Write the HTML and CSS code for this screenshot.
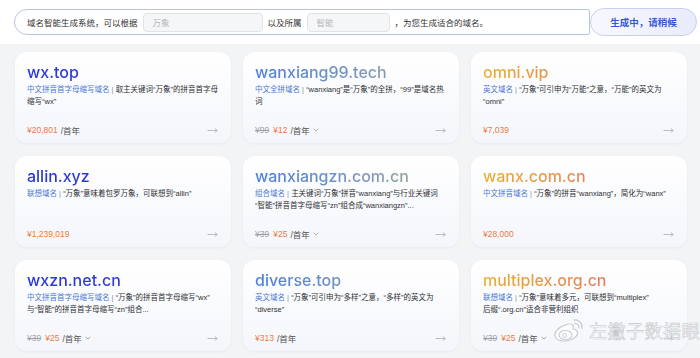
FILE: index.html
```html
<!DOCTYPE html>
<html lang="zh">
<head>
<meta charset="utf-8">
<title>域名智能生成</title>
<link rel="stylesheet" href="styles.css">
</head>
<body>
<div class="top">
  <div class="bar">
    <span class="lbl">域名智能生成系统，可以根据</span>
    <span class="inp w1">万象</span>
    <span class="lbl">以及所属</span>
    <span class="inp w2">智能</span>
    <span class="lbl">，为您生成适合的域名。</span>
  </div>
  <div class="btn">生成中，请稍候</div>
</div>

<div class="grid">
  <div class="card col1">
    <div class="name">wx.top</div>
    <p class="desc"><span class="tag">中文拼音首字母缩写域名</span><span class="sep"> | </span>取主关键词“万象”的拼音首字母<br>缩写“wx”</p>
    <div class="foot"><span class="price">¥20,801</span><span class="unit">/首年</span><svg class="arrow" width="11" height="7" viewBox="0 0 11 7"><path d="M0.5 3.5H10.3M7.8 1.5L10.3 3.5L7.8 5.5" fill="none" stroke="#a9adb5" stroke-width="0.8"/></svg></div>
  </div>
  <div class="card col2">
    <div class="name">wanxiang99.tech</div>
    <p class="desc"><span class="tag">中文全拼域名</span><span class="sep"> | </span>“wanxiang”是“万象”的全拼，“99”是域名热<br>词</p>
    <div class="foot"><span class="old">¥99</span><span class="price">¥12</span><span class="unit">/首年</span><svg class="chev" width="6" height="4" viewBox="0 0 6 4"><path d="M0.7 0.8L3 3L5.3 0.8" fill="none" stroke="#8a8e96" stroke-width="0.7"/></svg><svg class="arrow" width="11" height="7" viewBox="0 0 11 7"><path d="M0.5 3.5H10.3M7.8 1.5L10.3 3.5L7.8 5.5" fill="none" stroke="#a9adb5" stroke-width="0.8"/></svg></div>
  </div>
  <div class="card col3">
    <div class="name">omni.vip</div>
    <p class="desc"><span class="tag">英文域名</span><span class="sep"> | </span>“万象”可引申为“万能”之意，“万能”的英文为<br>“omni”</p>
    <div class="foot"><span class="price">¥7,039</span><svg class="arrow" width="11" height="7" viewBox="0 0 11 7"><path d="M0.5 3.5H10.3M7.8 1.5L10.3 3.5L7.8 5.5" fill="none" stroke="#a9adb5" stroke-width="0.8"/></svg></div>
  </div>

  <div class="card col1">
    <div class="name">allin.xyz</div>
    <p class="desc"><span class="tag">联想域名</span><span class="sep"> | </span>“万象”意味着包罗万象，可联想到“allin”</p>
    <div class="foot"><span class="price">¥1,239,019</span><svg class="arrow" width="11" height="7" viewBox="0 0 11 7"><path d="M0.5 3.5H10.3M7.8 1.5L10.3 3.5L7.8 5.5" fill="none" stroke="#a9adb5" stroke-width="0.8"/></svg></div>
  </div>
  <div class="card col2">
    <div class="name">wanxiangzn.com.cn</div>
    <p class="desc"><span class="tag">组合域名</span><span class="sep"> | </span>主关键词“万象”拼音“wanxiang”与行业关键词<br>“智能”拼音首字母缩写“zn”组合成“wanxiangzn”...</p>
    <div class="foot"><span class="old">¥39</span><span class="price">¥25</span><span class="unit">/首年</span><svg class="chev" width="6" height="4" viewBox="0 0 6 4"><path d="M0.7 0.8L3 3L5.3 0.8" fill="none" stroke="#8a8e96" stroke-width="0.7"/></svg><svg class="arrow" width="11" height="7" viewBox="0 0 11 7"><path d="M0.5 3.5H10.3M7.8 1.5L10.3 3.5L7.8 5.5" fill="none" stroke="#a9adb5" stroke-width="0.8"/></svg></div>
  </div>
  <div class="card col3">
    <div class="name">wanx.com.cn</div>
    <p class="desc"><span class="tag">中文拼音域名</span><span class="sep"> | </span>“万象”的拼音“wanxiang”，简化为“wanx”</p>
    <div class="foot"><span class="price">¥28,000</span><svg class="arrow" width="11" height="7" viewBox="0 0 11 7"><path d="M0.5 3.5H10.3M7.8 1.5L10.3 3.5L7.8 5.5" fill="none" stroke="#a9adb5" stroke-width="0.8"/></svg></div>
  </div>

  <div class="card col1">
    <div class="name">wxzn.net.cn</div>
    <p class="desc"><span class="tag">中文拼音首字母缩写域名</span><span class="sep"> | </span>“万象”的拼音首字母缩写“wx”<br>与“智能”的拼音首字母缩写“zn”组合...</p>
    <div class="foot"><span class="old">¥39</span><span class="price">¥25</span><span class="unit">/首年</span><svg class="chev" width="6" height="4" viewBox="0 0 6 4"><path d="M0.7 0.8L3 3L5.3 0.8" fill="none" stroke="#8a8e96" stroke-width="0.7"/></svg><svg class="arrow" width="11" height="7" viewBox="0 0 11 7"><path d="M0.5 3.5H10.3M7.8 1.5L10.3 3.5L7.8 5.5" fill="none" stroke="#a9adb5" stroke-width="0.8"/></svg></div>
  </div>
  <div class="card col2">
    <div class="name">diverse.top</div>
    <p class="desc"><span class="tag">英文域名</span><span class="sep"> | </span>“万象”可引申为“多样”之意，“多样”的英文为<br>“diverse”</p>
    <div class="foot"><span class="price">¥313</span><span class="unit">/首年</span><svg class="arrow" width="11" height="7" viewBox="0 0 11 7"><path d="M0.5 3.5H10.3M7.8 1.5L10.3 3.5L7.8 5.5" fill="none" stroke="#a9adb5" stroke-width="0.8"/></svg></div>
  </div>
  <div class="card col3">
    <div class="name">multiplex.org.cn</div>
    <p class="desc"><span class="tag">联想域名</span><span class="sep"> | </span>“万象”意味着多元，可联想到“multiplex”<br>后缀“.org.cn”适合非营利组织</p>
    <div class="foot"><span class="old">¥39</span><span class="price">¥25</span><span class="unit">/首年</span><svg class="chev" width="6" height="4" viewBox="0 0 6 4"><path d="M0.7 0.8L3 3L5.3 0.8" fill="none" stroke="#8a8e96" stroke-width="0.7"/></svg><svg class="arrow" width="11" height="7" viewBox="0 0 11 7"><path d="M0.5 3.5H10.3M7.8 1.5L10.3 3.5L7.8 5.5" fill="none" stroke="#a9adb5" stroke-width="0.8"/></svg></div>
  </div>
</div>

<div class="wm">
  <svg class="wm-logo" width="34" height="28" viewBox="0 0 34 28">
    <path d="M13 9C7 11 2 16 3 20C4 25 12 26 18 24C24 22 27 18 25 15C24 13 22 13 21 13C22 10 21 8 18 8C16 8 14.5 8.5 13 9Z" fill="rgba(255,255,255,0.8)" stroke="#c9cbcf" stroke-width="1.2"/>
    <ellipse cx="13.5" cy="19" rx="6.5" ry="4.5" fill="none" stroke="#c9cbcf" stroke-width="1.1"/>
    <circle cx="12.5" cy="19.5" r="2" fill="none" stroke="#c9cbcf" stroke-width="1"/>
    <path d="M22 4C27 3.5 31 7.5 30 12.5" fill="none" stroke="#c9cbcf" stroke-width="1.3" stroke-linecap="round"/>
    <path d="M22.5 7.5C25.5 7.3 27.3 9.5 26.7 12" fill="none" stroke="#c9cbcf" stroke-width="1.2" stroke-linecap="round"/>
  </svg>
  <span class="wm-text">左撇子数据眼</span>
</div>
</body>
</html>
```
FILE: styles.css
```css
html, body {
  margin: 0;
  padding: 0;
}
body {
  width: 700px;
  height: 358px;
  overflow: hidden;
  position: relative;
  background: #f3f4f6;
  font-family: "Liberation Sans", "Noto Sans CJK SC", sans-serif;
  color: #333;
}

.top {
  height: 44px;
  box-sizing: border-box;
  background: #ffffff;
  display: flex;
  align-items: center;
  padding-left: 14px;
}
.bar {
  width: 576px;
  height: 26px;
  box-sizing: border-box;
  border: 1px solid #bcc4e4;
  border-radius: 13px 2px 2px 13px;
  display: flex;
  align-items: center;
  padding-left: 12px;
  font-size: 8.5px;
  color: #333;
  background: #fff;
}
.inp {
  height: 19px;
  box-sizing: border-box;
  background: #f5f6f8;
  border: 1px solid #e1e3e9;
  border-radius: 4px;
  display: flex;
  align-items: center;
  padding-left: 9px;
  margin: 0 5px;
  color: #b3b6bd;
}
.w1 { width: 120px; }
.w2 { width: 83px; }

.btn {
  width: 107px;
  height: 28px;
  box-sizing: border-box;
  border: 1px solid #c9cff0;
  border-radius: 14px;
  background: linear-gradient(90deg, #f8f9fe, #e9ebfb);
  color: #3358d4;
  font-size: 9.5px;
  font-weight: bold;
  display: flex;
  align-items: center;
  justify-content: center;
}

.grid {
  display: grid;
  grid-template-columns: repeat(3, 216px);
  grid-auto-rows: 91px;
  column-gap: 12px;
  row-gap: 13px;
  padding: 8px 0 0 15px;
}
.card {
  box-sizing: border-box;
  border-radius: 12px;
  background: linear-gradient(180deg, #ffffff 0%, #f4f6fb 100%);
  box-shadow: 0 1px 3px rgba(30, 40, 80, 0.05);
  padding: 9px 8px 7px 12px;
  display: flex;
  flex-direction: column;
}
.name {
  font-family: "Inter", "Liberation Sans", sans-serif;
  font-weight: 500;
  font-size: 16px;
  line-height: 22px;
  color: transparent;
  -webkit-background-clip: text;
  background-clip: text;
  margin-right: 4px;
}
.col1 .name { background-image: linear-gradient(90deg, #2536d4 0%, #4b45c6 100%); }
.col2 .name { background-image: linear-gradient(90deg, #4a7fdc 0%, #7f97b8 60%, #aeab72 100%); }
.col3 .name { background-image: linear-gradient(90deg, #e9af34 0%, #e2875a 55%, #df5a78 100%); }

.desc {
  margin: 1px 0 0;
  font-size: 7.5px;
  line-height: 12px;
  color: #2e2f33;
  display: -webkit-box;
  -webkit-line-clamp: 2;
  -webkit-box-orient: vertical;
  overflow: hidden;
}
.tag { color: #4a78d8; }
.sep { color: #8d9099; }

.foot {
  margin-top: auto;
  height: 12px;
  display: flex;
  align-items: center;
  font-size: 8.5px;
  padding-right: 4px;
}
.old {
  color: #9fa2a8;
  text-decoration: line-through;
  margin-right: 4px;
}
.price { color: #ef7a3c; }
.unit { color: #555; margin-left: 3px; }
.chev { margin-left: 3px; }
.arrow { margin-left: auto; margin-right: 1px; }

.wm {
  position: absolute;
  left: 552px;
  top: 316px;
  display: flex;
  align-items: center;
  gap: 3px;
}
.wm-text {
  font-family: "Noto Sans CJK SC", sans-serif;
  font-size: 18px;
  line-height: 26px;
  color: rgba(255, 255, 255, 0.85);
  -webkit-text-stroke: 0.6px rgba(160, 162, 168, 0.6);
  letter-spacing: 0.5px;
}
```
